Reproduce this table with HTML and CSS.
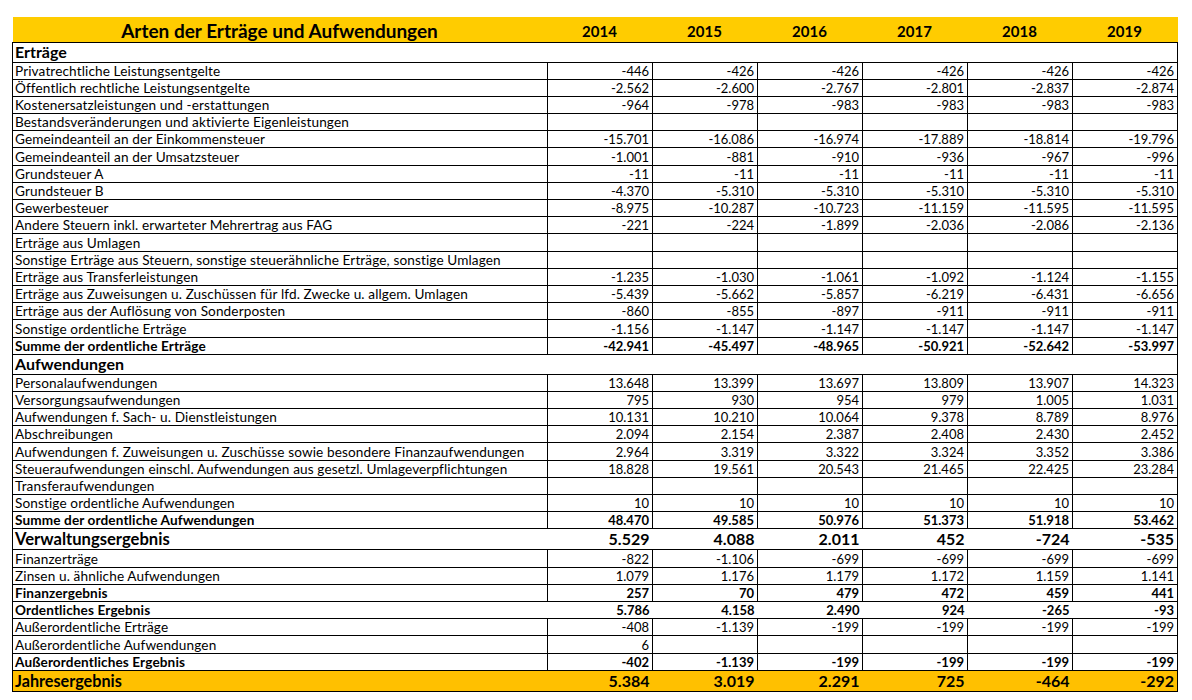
FILE: index.html
```html
<!DOCTYPE html>
<html lang="de">
<head>
<meta charset="utf-8">
<title>Arten der Erträge und Aufwendungen</title>
<link rel="stylesheet" href="styles.css">
</head>
<body>
<div class="sheet">
<table class="tbl">
<colgroup>
<col class="c-label"><col class="c-year"><col class="c-year"><col class="c-year"><col class="c-year"><col class="c-year"><col class="c-year">
</colgroup>
<thead>
<tr class="head"><th class="title">Arten der Erträge und Aufwendungen</th><th>2014</th><th>2015</th><th>2016</th><th>2017</th><th>2018</th><th>2019</th></tr>
</thead>
<tbody>
<tr class="section"><td colspan="7">Erträge</td></tr>
<tr class="grid"><td>Privatrechtliche Leistungsentgelte</td><td>-446</td><td>-426</td><td>-426</td><td>-426</td><td>-426</td><td>-426</td></tr>
<tr class="grid"><td>Öffentlich rechtliche Leistungsentgelte</td><td>-2.562</td><td>-2.600</td><td>-2.767</td><td>-2.801</td><td>-2.837</td><td>-2.874</td></tr>
<tr class="grid"><td>Kostenersatzleistungen und -erstattungen</td><td>-964</td><td>-978</td><td>-983</td><td>-983</td><td>-983</td><td>-983</td></tr>
<tr class="grid"><td>Bestandsveränderungen und aktivierte Eigenleistungen</td><td></td><td></td><td></td><td></td><td></td><td></td></tr>
<tr class="grid"><td>Gemeindeanteil an der Einkommensteuer</td><td>-15.701</td><td>-16.086</td><td>-16.974</td><td>-17.889</td><td>-18.814</td><td>-19.796</td></tr>
<tr class="grid"><td>Gemeindeanteil an der Umsatzsteuer</td><td>-1.001</td><td>-881</td><td>-910</td><td>-936</td><td>-967</td><td>-996</td></tr>
<tr class="grid"><td>Grundsteuer A</td><td>-11</td><td>-11</td><td>-11</td><td>-11</td><td>-11</td><td>-11</td></tr>
<tr class="grid"><td>Grundsteuer B</td><td>-4.370</td><td>-5.310</td><td>-5.310</td><td>-5.310</td><td>-5.310</td><td>-5.310</td></tr>
<tr class="grid"><td>Gewerbesteuer</td><td>-8.975</td><td>-10.287</td><td>-10.723</td><td>-11.159</td><td>-11.595</td><td>-11.595</td></tr>
<tr class="grid"><td>Andere Steuern inkl. erwarteter Mehrertrag aus FAG</td><td>-221</td><td>-224</td><td>-1.899</td><td>-2.036</td><td>-2.086</td><td>-2.136</td></tr>
<tr class="grid"><td>Erträge aus Umlagen</td><td></td><td></td><td></td><td></td><td></td><td></td></tr>
<tr class="grid"><td>Sonstige Erträge aus Steuern, sonstige steuerähnliche Erträge, sonstige Umlagen</td><td></td><td></td><td></td><td></td><td></td><td></td></tr>
<tr class="grid"><td>Erträge aus Transferleistungen</td><td>-1.235</td><td>-1.030</td><td>-1.061</td><td>-1.092</td><td>-1.124</td><td>-1.155</td></tr>
<tr class="grid"><td>Erträge aus Zuweisungen u. Zuschüssen für lfd. Zwecke u. allgem. Umlagen</td><td>-5.439</td><td>-5.662</td><td>-5.857</td><td>-6.219</td><td>-6.431</td><td>-6.656</td></tr>
<tr class="grid"><td>Erträge aus der Auflösung von Sonderposten</td><td>-860</td><td>-855</td><td>-897</td><td>-911</td><td>-911</td><td>-911</td></tr>
<tr class="grid"><td>Sonstige ordentliche Erträge</td><td>-1.156</td><td>-1.147</td><td>-1.147</td><td>-1.147</td><td>-1.147</td><td>-1.147</td></tr>
<tr class="grid sum"><td>Summe der ordentliche Erträge</td><td>-42.941</td><td>-45.497</td><td>-48.965</td><td>-50.921</td><td>-52.642</td><td>-53.997</td></tr>
<tr class="section"><td colspan="7">Aufwendungen</td></tr>
<tr class="grid"><td>Personalaufwendungen</td><td>13.648</td><td>13.399</td><td>13.697</td><td>13.809</td><td>13.907</td><td>14.323</td></tr>
<tr class="grid"><td>Versorgungsaufwendungen</td><td>795</td><td>930</td><td>954</td><td>979</td><td>1.005</td><td>1.031</td></tr>
<tr class="grid"><td>Aufwendungen f. Sach- u. Dienstleistungen</td><td>10.131</td><td>10.210</td><td>10.064</td><td>9.378</td><td>8.789</td><td>8.976</td></tr>
<tr class="grid"><td>Abschreibungen</td><td>2.094</td><td>2.154</td><td>2.387</td><td>2.408</td><td>2.430</td><td>2.452</td></tr>
<tr class="grid"><td>Aufwendungen f. Zuweisungen u. Zuschüsse sowie besondere Finanzaufwendungen</td><td>2.964</td><td>3.319</td><td>3.322</td><td>3.324</td><td>3.352</td><td>3.386</td></tr>
<tr class="grid"><td>Steueraufwendungen einschl. Aufwendungen aus gesetzl. Umlageverpflichtungen</td><td>18.828</td><td>19.561</td><td>20.543</td><td>21.465</td><td>22.425</td><td>23.284</td></tr>
<tr class="grid"><td>Transferaufwendungen</td><td></td><td></td><td></td><td></td><td></td><td></td></tr>
<tr class="grid"><td>Sonstige ordentliche Aufwendungen</td><td>10</td><td>10</td><td>10</td><td>10</td><td>10</td><td>10</td></tr>
<tr class="grid sum"><td>Summe der ordentliche Aufwendungen</td><td>48.470</td><td>49.585</td><td>50.976</td><td>51.373</td><td>51.918</td><td>53.462</td></tr>
<tr class="band big"><td>Verwaltungsergebnis</td><td>5.529</td><td>4.088</td><td>2.011</td><td>452</td><td>-724</td><td>-535</td></tr>
<tr class="grid"><td>Finanzerträge</td><td>-822</td><td>-1.106</td><td>-699</td><td>-699</td><td>-699</td><td>-699</td></tr>
<tr class="grid"><td>Zinsen u. ähnliche Aufwendungen</td><td>1.079</td><td>1.176</td><td>1.179</td><td>1.172</td><td>1.159</td><td>1.141</td></tr>
<tr class="grid sum"><td>Finanzergebnis</td><td>257</td><td>70</td><td>479</td><td>472</td><td>459</td><td>441</td></tr>
<tr class="band sum"><td>Ordentliches Ergebnis</td><td>5.786</td><td>4.158</td><td>2.490</td><td>924</td><td>-265</td><td>-93</td></tr>
<tr class="grid"><td>Außerordentliche Erträge</td><td>-408</td><td>-1.139</td><td>-199</td><td>-199</td><td>-199</td><td>-199</td></tr>
<tr class="grid"><td>Außerordentliche Aufwendungen</td><td>6</td><td></td><td></td><td></td><td></td><td></td></tr>
<tr class="grid sum"><td>Außerordentliches Ergebnis</td><td>-402</td><td>-1.139</td><td>-199</td><td>-199</td><td>-199</td><td>-199</td></tr>
<tr class="band big total"><td>Jahresergebnis</td><td>5.384</td><td>3.019</td><td>2.291</td><td>725</td><td>-464</td><td>-292</td></tr>
</tbody>
</table>
</div>
</body>
</html>
```

FILE: styles.css
```css
html, body {
  margin: 0;
  padding: 0;
  background: #ffffff;
}

.sheet {
  padding: 17px 0 0 12px;
}

.tbl {
  border-collapse: collapse;
  table-layout: fixed;
  width: 1165px;
  font-family: Lato, "Liberation Sans", sans-serif;
  font-size: 13px;
  color: #000;
}

.c-label { width: 535px; }
.c-year { width: 105px; }

.tbl th,
.tbl td {
  padding: 0 3px 0 2px;
  line-height: 14px;
  vertical-align: bottom;
  white-space: nowrap;
  overflow: hidden;
}

.tbl td:first-child {
  font-size: 13.6px;
  letter-spacing: 0.12px;
}

.tbl td + td { text-align: right; }

/* header */
.head { height: 25px; }
.head th {
  background: #ffcc00;
  border-bottom: 1px solid #000;
  font-weight: 700;
  font-size: 15px;
  text-align: center;
  padding-bottom: 2px;
  line-height: 18px;
}
.head th.title {
  font-size: 19px;
  line-height: 21px;
  padding-bottom: 1px;
}

/* section title rows */
.section { height: 20px; }
.tbl .section td {
  border: 1px solid #000;
  font-weight: 700;
  font-size: 16px;
  letter-spacing: 0;
  line-height: 18px;
  padding-bottom: 1px;
}

/* full-grid rows */
.grid { height: 17.2px; }
.grid td {
  border: 1px solid #000;
  padding-bottom: 1px;
}

/* rows boxed only at the outside */
.band { height: 17.2px; }
.band td {
  border-top: 1px solid #000;
  border-bottom: 1px solid #000;
  padding-bottom: 1px;
}
.band td:first-child { border-left: 1px solid #000; }
.band td:last-child { border-right: 1px solid #000; }

.sum td { font-weight: 700; }

.big { height: 21px; }
.tbl .big td {
  font-weight: 700;
  font-size: 16px;
  letter-spacing: 0;
  line-height: 18px;
}
.tbl .big td:first-child {
  font-size: 16.6px;
}
.tbl .total td:first-child {
  font-size: 16.2px;
}

.total td { background: #ffc000; }
```
